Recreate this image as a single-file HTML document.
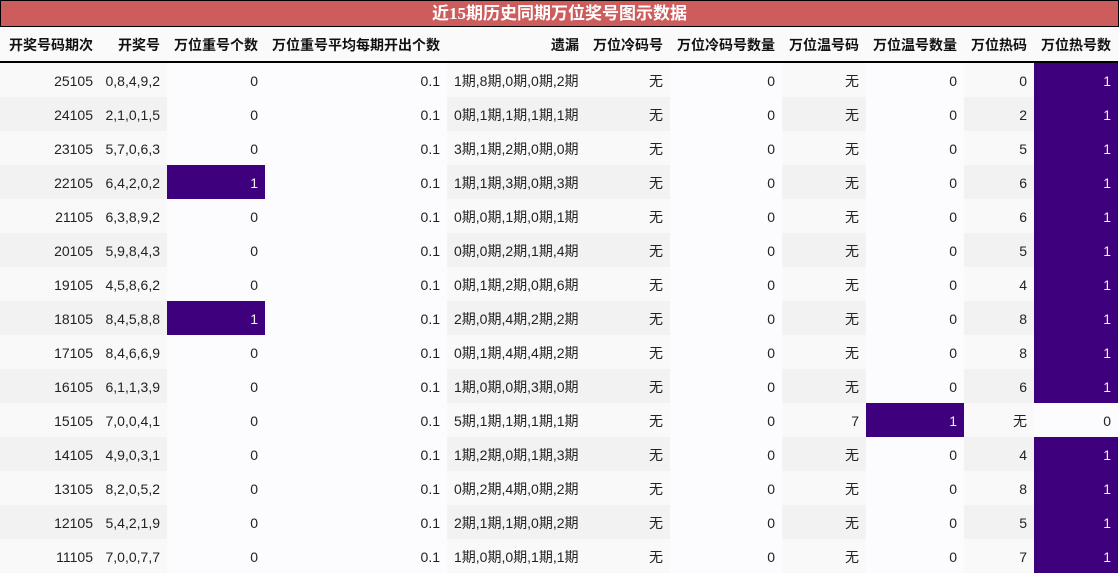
<!DOCTYPE html>
<html><head><meta charset="utf-8"><style>
body{margin:0;background:#fff;font-family:"Liberation Sans","Noto Sans CJK SC",sans-serif;}
.title{position:absolute;left:0;top:0;width:1117px;height:25px;background:#cd5c5c;border:1px solid #000;color:#fff;font-weight:bold;font-size:17px;line-height:26px;text-align:center;font-family:"Liberation Serif","Noto Sans CJK SC",sans-serif;}
table{position:absolute;left:0;top:27px;border-collapse:collapse;table-layout:fixed;width:1118px;font-size:14px;color:#222;}
th{height:32px;background:#fafafa;font-weight:bold;text-align:right;padding:2px 7px 0 0;border-bottom:2px solid #000;color:#111;white-space:nowrap;}
td{height:33px;padding:1px 7px 0 0;text-align:right;white-space:nowrap;background:#f9f9f9;}
tbody tr:nth-child(even) td{background:#f2f2f2;}
td.n{background:#fcfbfd !important;}
td.p{background:#3f007d !important;color:#f1f1f1;}
td.l{text-align:left;padding:1px 0 0 7px;}
</style></head><body>
<div class="title">近15期历史同期万位奖号图示数据</div>
<table>
<colgroup><col style="width:100px"><col style="width:67px"><col style="width:98px"><col style="width:182px"><col style="width:139px"><col style="width:84px"><col style="width:112px"><col style="width:84px"><col style="width:98px"><col style="width:70px"><col style="width:84px"></colgroup>
<thead><tr><th>开奖号码期次</th><th>开奖号</th><th>万位重号个数</th><th>万位重号平均每期开出个数</th><th>遗漏</th><th>万位冷码号</th><th>万位冷码号数量</th><th>万位温号码</th><th>万位温号数量</th><th>万位热码</th><th>万位热号数</th></tr></thead>
<tbody>
<tr><td>25105</td><td>0,8,4,9,2</td><td class="n">0</td><td class="n">0.1</td><td class="l">1期,8期,0期,0期,2期</td><td>无</td><td class="n">0</td><td>无</td><td class="n">0</td><td>0</td><td class="p">1</td></tr>
<tr><td>24105</td><td>2,1,0,1,5</td><td class="n">0</td><td class="n">0.1</td><td class="l">0期,1期,1期,1期,1期</td><td>无</td><td class="n">0</td><td>无</td><td class="n">0</td><td>2</td><td class="p">1</td></tr>
<tr><td>23105</td><td>5,7,0,6,3</td><td class="n">0</td><td class="n">0.1</td><td class="l">3期,1期,2期,0期,0期</td><td>无</td><td class="n">0</td><td>无</td><td class="n">0</td><td>5</td><td class="p">1</td></tr>
<tr><td>22105</td><td>6,4,2,0,2</td><td class="p">1</td><td class="n">0.1</td><td class="l">1期,1期,3期,0期,3期</td><td>无</td><td class="n">0</td><td>无</td><td class="n">0</td><td>6</td><td class="p">1</td></tr>
<tr><td>21105</td><td>6,3,8,9,2</td><td class="n">0</td><td class="n">0.1</td><td class="l">0期,0期,1期,0期,1期</td><td>无</td><td class="n">0</td><td>无</td><td class="n">0</td><td>6</td><td class="p">1</td></tr>
<tr><td>20105</td><td>5,9,8,4,3</td><td class="n">0</td><td class="n">0.1</td><td class="l">0期,0期,2期,1期,4期</td><td>无</td><td class="n">0</td><td>无</td><td class="n">0</td><td>5</td><td class="p">1</td></tr>
<tr><td>19105</td><td>4,5,8,6,2</td><td class="n">0</td><td class="n">0.1</td><td class="l">0期,1期,2期,0期,6期</td><td>无</td><td class="n">0</td><td>无</td><td class="n">0</td><td>4</td><td class="p">1</td></tr>
<tr><td>18105</td><td>8,4,5,8,8</td><td class="p">1</td><td class="n">0.1</td><td class="l">2期,0期,4期,2期,2期</td><td>无</td><td class="n">0</td><td>无</td><td class="n">0</td><td>8</td><td class="p">1</td></tr>
<tr><td>17105</td><td>8,4,6,6,9</td><td class="n">0</td><td class="n">0.1</td><td class="l">0期,1期,4期,4期,2期</td><td>无</td><td class="n">0</td><td>无</td><td class="n">0</td><td>8</td><td class="p">1</td></tr>
<tr><td>16105</td><td>6,1,1,3,9</td><td class="n">0</td><td class="n">0.1</td><td class="l">1期,0期,0期,3期,0期</td><td>无</td><td class="n">0</td><td>无</td><td class="n">0</td><td>6</td><td class="p">1</td></tr>
<tr><td>15105</td><td>7,0,0,4,1</td><td class="n">0</td><td class="n">0.1</td><td class="l">5期,1期,1期,1期,1期</td><td>无</td><td class="n">0</td><td>7</td><td class="p">1</td><td>无</td><td class="n">0</td></tr>
<tr><td>14105</td><td>4,9,0,3,1</td><td class="n">0</td><td class="n">0.1</td><td class="l">1期,2期,0期,1期,3期</td><td>无</td><td class="n">0</td><td>无</td><td class="n">0</td><td>4</td><td class="p">1</td></tr>
<tr><td>13105</td><td>8,2,0,5,2</td><td class="n">0</td><td class="n">0.1</td><td class="l">0期,2期,4期,0期,2期</td><td>无</td><td class="n">0</td><td>无</td><td class="n">0</td><td>8</td><td class="p">1</td></tr>
<tr><td>12105</td><td>5,4,2,1,9</td><td class="n">0</td><td class="n">0.1</td><td class="l">2期,1期,1期,0期,2期</td><td>无</td><td class="n">0</td><td>无</td><td class="n">0</td><td>5</td><td class="p">1</td></tr>
<tr><td>11105</td><td>7,0,0,7,7</td><td class="n">0</td><td class="n">0.1</td><td class="l">1期,0期,0期,1期,1期</td><td>无</td><td class="n">0</td><td>无</td><td class="n">0</td><td>7</td><td class="p">1</td></tr>
</tbody></table>
</body></html>
